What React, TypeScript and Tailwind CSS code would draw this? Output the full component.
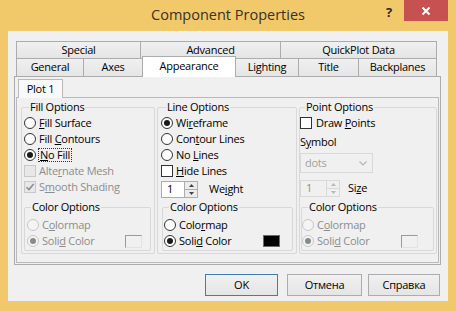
import React from "react";

const Radio = ({ checked = false, disabled = false }: { checked?: boolean; disabled?: boolean }) => (
  <span
    className={
      disabled
        ? "flex h-[12px] w-[12px] shrink-0 items-center justify-center rounded-full border border-[#c8c8c8] bg-[#f4f4f4]"
        : "flex h-[12px] w-[12px] shrink-0 items-center justify-center rounded-full border border-[#333] bg-white"
    }
  >
    {checked && <span className={disabled ? "h-[6px] w-[6px] rounded-full bg-[#8a8a8a]" : "h-[6px] w-[6px] rounded-full bg-[#1a1a1a]"} />}
  </span>
);

const Check = ({ checked = false, disabled = false }: { checked?: boolean; disabled?: boolean }) => (
  <span
    className={
      disabled
        ? "flex h-[12px] w-[12px] shrink-0 items-center justify-center border border-[#c8c8c8] bg-[#e8e8e8]"
        : "flex h-[12px] w-[12px] shrink-0 items-center justify-center border border-[#333] bg-white"
    }
  >
    {checked && (
      <svg width="10" height="10" viewBox="0 0 10 10">
        <path d="M1.5 5.2 L4 7.6 L8.6 2" fill="none" stroke={disabled ? "#8a8a8a" : "#222"} strokeWidth="1.5" />
      </svg>
    )}
  </span>
);

const Row = ({ children, className = "" }: { children: React.ReactNode; className?: string }) => (
  <div className={`flex h-[16px] items-center ${className}`}>{children}</div>
);

const Label = ({ children, disabled = false }: { children: React.ReactNode; disabled?: boolean }) => (
  <span className={disabled ? "ml-[3px] whitespace-nowrap text-[#8d8d8d]" : "ml-[3px] whitespace-nowrap"}>{children}</span>
);

const Arrow = ({ up, color }: { up?: boolean; color: string }) => (
  <svg width="5" height="3" viewBox="0 0 5 3">
    <path d={up ? "M0 3 L2.5 0 L5 3 Z" : "M0 0 L2.5 3 L5 0 Z"} fill={color} />
  </svg>
);

const Spin = ({ disabled = false, className = "" }: { disabled?: boolean; className?: string }) => (
  <div
    className={
      disabled
        ? `flex border border-[#d9d9d9] bg-[#f0f0f0] text-[#8d8d8d] ${className}`
        : `flex border border-[#abadb3] bg-white ${className}`
    }
  >
    <span className="flex flex-1 items-center pl-[5px]">1</span>
    <div className={disabled ? "flex w-[13px] flex-col border-l border-[#d9d9d9]" : "flex w-[13px] flex-col border-l border-[#acacac]"}>
      <span className={disabled ? "flex flex-1 items-center justify-center border-b border-[#d9d9d9] bg-[#f0f0f0]" : "flex flex-1 items-center justify-center border-b border-[#acacac] bg-[#ececec]"}>
        <Arrow up color={disabled ? "#b8b8b8" : "#444"} />
      </span>
      <span className={disabled ? "flex flex-1 items-center justify-center bg-[#f0f0f0]" : "flex flex-1 items-center justify-center bg-[#ececec]"}>
        <Arrow color={disabled ? "#b8b8b8" : "#444"} />
      </span>
    </div>
  </div>
);

const GroupLabel = ({ children, className }: { children: React.ReactNode; className: string }) => (
  <span className={`absolute top-[-9px] bg-[#f0f0f0] px-[1px] leading-[16px] ${className}`}>{children}</span>
);

const ColorOptions = ({ disabled, swatch, className, labelLeft, rowPad }: { disabled: boolean; swatch: React.ReactNode; className: string; labelLeft: string; rowPad: string }) => (
  <div className={`relative h-[44px] rounded-[2px] border border-[#d8d8d8] pt-[9px] ${className}`}>
    <GroupLabel className={labelLeft}>Color Options</GroupLabel>
    <div className={rowPad}>
      <Row>
        <Radio disabled={disabled} />
        <Label disabled={disabled}>
          {disabled ? (
            <>C<u>o</u>lormap</>
          ) : (
            <>Colo<u>r</u>map</>
          )}
        </Label>
      </Row>
      <Row>
        <Radio checked disabled={disabled} />
        <Label disabled={disabled}>
          Soli<u>d</u> Color
        </Label>
        {swatch}
      </Row>
    </div>
  </div>
);

const EmptySwatch = ({ className }: { className: string }) => (
  <span className={`ml-auto h-[13px] w-[17px] border-l border-t border-r border-b border-l-[#9a9a9a] border-t-[#9a9a9a] border-r-[#e2e2e2] border-b-[#e2e2e2] ${className}`} />
);

const Tab = ({ children, className }: { children: React.ReactNode; className: string }) => (
  <div className={`flex items-center justify-center border-[#acacac] bg-gradient-to-b from-[#f0f0f0] to-[#e5e5e5] ${className}`}>{children}</div>
);

const Button = ({ children, className }: { children: React.ReactNode; className: string }) => (
  <div className={`flex h-[22px] items-center justify-center border bg-gradient-to-b from-[#f0f0f0] to-[#e5e5e5] ${className}`}>{children}</div>
);

export default function App() {
  return (
    <div className="h-[311px] w-[456px] bg-[#f1c96b] font-['Open_Sans','Noto_Sans',sans-serif] text-[11px] tracking-[-0.25px] text-black">
      {/* title bar */}
      <div className="grid h-[31px] grid-cols-[1fr_auto_1fr]">
        <div />
        <div className="flex items-center pb-[1px] text-[14.5px] tracking-normal text-[#3a3022]">Component Properties</div>
        <div className="flex items-start justify-end pr-[8px]">
          <span className="mr-[12px] mt-[5px] text-[13px] font-bold leading-[14px] text-[#2a2a2a]">?</span>
          <div className="flex h-[21px] w-[44px] items-center justify-center bg-[#c75050]">
            <svg width="10" height="10" viewBox="0 0 10 10">
              <path d="M1.5 1.5 L8.5 8.5 M8.5 1.5 L1.5 8.5" stroke="#fff" strokeWidth="2" />
            </svg>
          </div>
        </div>
      </div>

      {/* client */}
      <div className="mx-[8px] flex h-[270px] flex-col bg-[#f0f0f0] pt-[10px]">
        {/* tab rows */}
        <div className="ml-[8px] w-[421px]">
          <div className="flex h-[17px]">
            <Tab className="w-[124px] border-l border-t">Special</Tab>
            <Tab className="w-[140px] border-l border-t">Advanced</Tab>
            <Tab className="w-[157px] border-l border-r border-t">QuickPlot Data</Tab>
          </div>
          <div className="flex h-[18px] items-end">
            <Tab className="h-[18px] w-[67px] border-l border-t">General</Tab>
            <Tab className="h-[18px] w-[59px] border-l border-t">Axes</Tab>
            <div className="relative z-10 mb-[-1px] flex h-[21px] w-[94px] items-start justify-center border-l border-r border-t border-[#acacac] bg-white pt-[1px]">
              Appearance
            </div>
            <Tab className="h-[18px] w-[62px] border-t">Lighting</Tab>
            <Tab className="h-[18px] w-[60px] border-l border-t">Title</Tab>
            <Tab className="h-[18px] w-[79px] border-l border-r border-t">Backplanes</Tab>
          </div>
        </div>

        {/* tab page */}
        <div className="ml-[6px] flex h-[189px] w-[427px] flex-col border border-[#acacac] bg-[#f0f0f0] p-[1px]">
          <div className="mt-[1px] flex h-[18px]">
            <div className="relative z-10 ml-[2px] flex h-[19px] w-[45px] items-center justify-center border-l border-r border-t border-[#b9b9b9] bg-[#f9f9f9]">
              Plot 1
            </div>
          </div>
          <div className="mx-[0px] flex h-[166px] gap-[2px] border border-[#b9b9b9] bg-[#f0f0f0] pl-[4px] pt-[9px]">
            {/* Fill options */}
            <div className="relative h-[147px] w-[134px] rounded-[2px] border border-[#d8d8d8] pt-[7px]">
              <GroupLabel className="left-[7px]">Fill Options</GroupLabel>
              <div className="pl-[2px]">
                <Row>
                  <Radio />
                  <Label>
                    <u>F</u>ill Surface
                  </Label>
                </Row>
                <Row>
                  <Radio />
                  <Label>
                    Fill <u>C</u>ontours
                  </Label>
                </Row>
                <Row>
                  <Radio checked />
                  <span className="ml-[2px] whitespace-nowrap border border-dotted border-[#333] px-[1px] leading-[12px]">
                    <u>N</u>o Fill
                  </span>
                </Row>
                <Row>
                  <Check disabled />
                  <Label disabled>
                    Alte<u>r</u>nate Mesh
                  </Label>
                </Row>
                <Row>
                  <Check checked disabled />
                  <Label disabled>
                    S<u>m</u>ooth Shading
                  </Label>
                </Row>
              </div>
              <ColorOptions
                disabled
                className="ml-[2px] mt-[12px] w-[127px]"
                labelLeft="left-[6px]"
                rowPad="pl-[2px] pr-[8px]"
                swatch={<EmptySwatch className="" />}
              />
            </div>

            {/* Line options */}
            <div className="relative h-[147px] w-[140px] rounded-[2px] border border-[#d8d8d8] pt-[7px]">
              <GroupLabel className="left-[8px]">Line Options</GroupLabel>
              <div className="pl-[3px]">
                <Row>
                  <Radio checked />
                  <Label>
                    Wi<u>r</u>eframe
                  </Label>
                </Row>
                <Row>
                  <Radio />
                  <Label>
                    Con<u>t</u>our Lines
                  </Label>
                </Row>
                <Row>
                  <Radio />
                  <Label>
                    No <u>L</u>ines
                  </Label>
                </Row>
                <Row>
                  <Check />
                  <Label>
                    <u>H</u>ide Lines
                  </Label>
                </Row>
                <div className="mt-[2px] flex items-center">
                  <Spin className="h-[17px] w-[37px]" />
                  <span className="ml-[11px]">
                    We<u>i</u>ght
                  </span>
                </div>
              </div>
              <ColorOptions
                disabled={false}
                className="ml-[4px] mt-[9px] w-[131px]"
                labelLeft="left-[6px]"
                rowPad="pl-[1px] pr-[12px]"
                swatch={<span className="ml-auto h-[12px] w-[17px] border border-[#6a6a6a] bg-black" />}
              />
            </div>

            {/* Point options */}
            <div className="relative h-[147px] w-[138px] rounded-[2px] border border-[#d8d8d8] pt-[7px]">
              <GroupLabel className="left-[5px]">Point Options</GroupLabel>
              <Row>
                <Check />
                <span className="ml-[4px] whitespace-nowrap">
                  Draw <u>P</u>oints
                </span>
              </Row>
              <Row className="mt-[3px]">
                <span>
                  S<u>y</u>mbol
                </span>
              </Row>
              <div className="mt-[3px] flex h-[20px] w-[73px] items-center justify-between border border-[#d9d9d9] bg-[#f0f0f0] pl-[4px] pr-[5px] text-[#a0a0a0]">
                <span>dots</span>
                <svg width="8" height="5" viewBox="0 0 8 5">
                  <path d="M0.5 0.5 L4 4 L7.5 0.5" fill="none" stroke="#b5b5b5" strokeWidth="1.2" />
                </svg>
              </div>
              <div className="mt-[7px] flex items-center">
                <Spin disabled className="h-[17px] w-[40px]" />
                <span className="ml-[8px]">
                  Si<u>z</u>e
                </span>
              </div>
              <ColorOptions
                disabled
                className="ml-[1px] mt-[10px] w-[133px]"
                labelLeft="left-[6px]"
                rowPad="pl-[0px] pr-[15px]"
                swatch={<EmptySwatch className="" />}
              />
            </div>
          </div>
        </div>

        {/* buttons */}
        <div className="mt-[9px] flex justify-end pr-[8px]">
          <Button className="w-[73px] border-[#3c7fb1]">OK</Button>
          <Button className="ml-[9px] w-[75px] border-[#acacac]">Отмена</Button>
          <Button className="ml-[6px] w-[72px] border-[#acacac]">Справка</Button>
        </div>
      </div>
    </div>
  );
}
